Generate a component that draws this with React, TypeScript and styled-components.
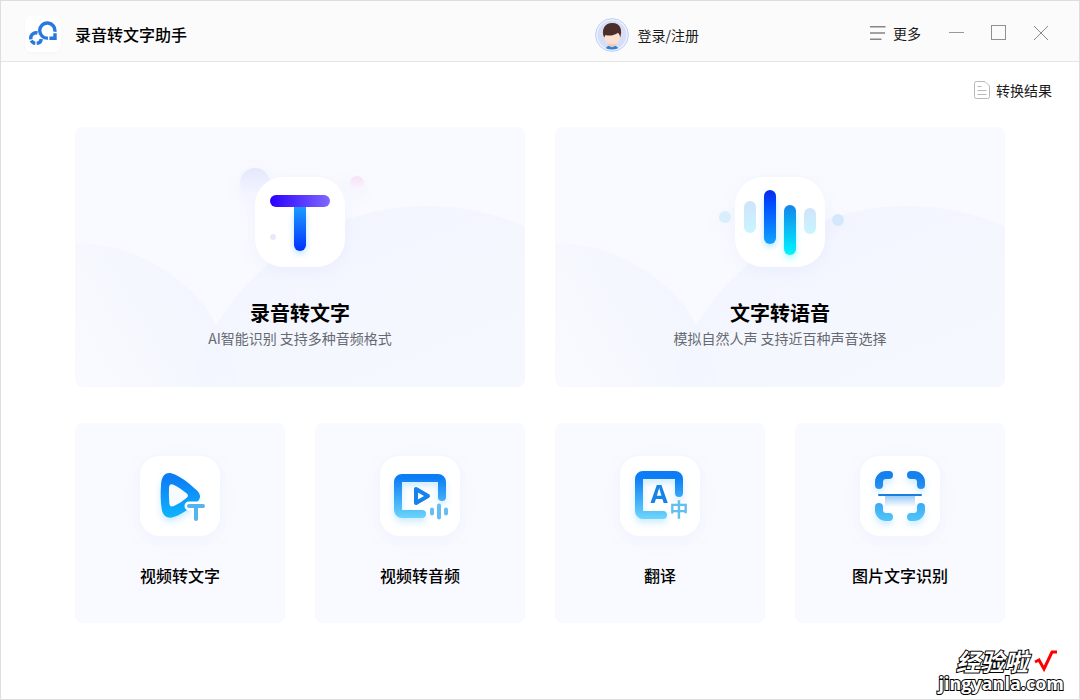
import React from "react";
import styled, { createGlobalStyle } from "styled-components";

const GlobalStyle = createGlobalStyle`
  *, *::before, *::after { box-sizing: border-box; }
  body {
    margin: 0;
    background: #ffffff;
    color: #000000;
    font-family: "Noto Sans CJK SC", "Noto Sans", sans-serif;
    font-size: 14px;
    line-height: 20px;
  }
  button { font: inherit; color: inherit; cursor: pointer; }
  svg { display: block; flex: none; }
`;

const AppWindow = styled.div`
  display: flex;
  flex-direction: column;
  min-height: 100vh;
  border: 1px solid #dedede;
`;

const TitleBar = styled.header`
  display: flex;
  align-items: center;
  height: 61px;
  padding: 6px 28px 0 24px;
  background: #fbfbfb;
  border-bottom: 1px solid #e6e6e6;
`;

const Brand = styled.h1`
  display: flex;
  align-items: center;
  gap: 14px;
  margin: 0;
  font-size: 16px;
  font-weight: 500;
  line-height: 24px;
  white-space: nowrap;
`;

const LogoTile = styled.span`
  display: grid;
  place-items: center;
  width: 36px;
  height: 36px;
  border-radius: 6px;
  background: #ffffff;
  box-shadow: 0 1px 3px rgba(0, 0, 0, 0.03);
`;

const PlainButton = styled.button`
  display: inline-flex;
  align-items: center;
  padding: 0;
  border: 0;
  background: none;
  white-space: nowrap;
`;

const AccountButton = styled(PlainButton)`
  gap: 9px;
  margin-left: auto;
  padding-top: 2px;
  color: #1a1a1a;
`;

const WindowTools = styled.div`
  display: flex;
  align-items: center;
  gap: 26px;
  margin-left: 171px;
  padding-bottom: 2px;
`;

const MoreButton = styled(PlainButton)`
  gap: 7px;
  color: #1a1a1a;
`;

const WindowButtons = styled.div`
  display: flex;
  gap: 22px;
`;

const WindowButton = styled(PlainButton)`
  justify-content: center;
  width: 20px;
  height: 20px;
`;

const Content = styled.main`
  display: flex;
  flex-direction: column;
  padding: 18px 27px 76px 74px;
`;

const ResultsLink = styled.a`
  display: flex;
  align-items: center;
  align-self: flex-end;
  gap: 6px;
  color: #1a1a1a;
  text-decoration: none;
`;

const CardGrid = styled.div`
  display: grid;
  grid-template-columns: repeat(4, 1fr);
  gap: 36px 30px;
  margin: 27px 47px 0 0;
`;

const Card = styled.button<{ $wide?: boolean }>`
  position: relative;
  display: flex;
  flex-direction: column;
  align-items: center;
  grid-column: span ${(p) => (p.$wide ? 2 : 1)};
  height: ${(p) => (p.$wide ? 260 : 200)}px;
  padding: ${(p) => (p.$wide ? 50 : 33)}px 0 0;
  border: 0;
  border-radius: 8px;
  background: #f9faff;
  overflow: hidden;
`;

const CardBackdrop = styled.svg`
  position: absolute;
  inset: 0;
  width: 100%;
  height: 100%;
`;

const IconTile = styled.span<{ $large?: boolean }>`
  position: relative;
  width: ${(p) => (p.$large ? 90 : 80)}px;
  height: ${(p) => (p.$large ? 90 : 80)}px;
  border-radius: ${(p) => (p.$large ? 28 : 20)}px;
  filter: drop-shadow(0 4px 8px rgba(90, 110, 240, 0.06));

  svg { overflow: visible; }
`;

const CardTitle = styled.span<{ $large?: boolean }>`
  position: relative;
  margin-top: ${(p) => (p.$large ? 32 : 27)}px;
  font-size: ${(p) => (p.$large ? 20 : 16)}px;
  font-weight: ${(p) => (p.$large ? 700 : 500)};
  line-height: ${(p) => (p.$large ? 28 : 24)}px;
`;

const CardNote = styled.span`
  position: relative;
  margin-top: 1px;
  color: #666a70;
`;

const Watermark = styled.div`
  position: absolute;
  right: 16px;
  bottom: 7px;
  display: flex;
  flex-direction: column;
  align-items: flex-end;
  color: #ffffff;
  font-weight: 700;
  -webkit-text-stroke: 2px #000000;
  paint-order: stroke fill;
`;

const WatermarkName = styled.div`
  display: flex;
  align-items: center;
  gap: 6px;
  padding-right: 6px;
  font-size: 24px;
  font-style: italic;
  line-height: 24px;
`;

const WatermarkSite = styled.div`
  font-family: "Open Sans", "Noto Sans", sans-serif;
  font-size: 18px;
  line-height: 20px;
`;

function LogoIcon() {
  return (
    <svg width="30" height="26" viewBox="0 0 30 26" fill="none" stroke="#2878e0" strokeWidth="3.400">
      <path d="M26.8 10.800A7.600 7.600 0 1 0 20 17.100" />
      <path d="M27 12.200v5h-5.600" />
      <path d="M9.500 12A5.300 5.300 0 0 0 2.900 18.300" />
      <path d="M3.300 19.500A5.300 5.300 0 0 0 7.300 22.400" />
      <path d="M8.700 22.400A5.300 5.300 0 0 0 13.300 17.900" />
    </svg>
  );
}

function Avatar() {
  return (
    <svg width="34" height="34" viewBox="0 0 34 34">
      <defs><clipPath id="avatarClip"><circle cx="17" cy="17" r="14.5" /></clipPath></defs>
      <circle cx="17" cy="17" r="16.4" fill="#eef3ff" stroke="#b9cff8" strokeWidth="1" />
      <circle cx="17" cy="17" r="14.5" fill="#d8def6" />
      <g clipPath="url(#avatarClip)">
        <path d="M10 33c0-4 3-5.500 7-5.500s7 1.500 7 5.500z" fill="#2f80d6" />
        <path d="M13.500 25h7v2.500q-3.500 3.500-7 0z" fill="#efc6b2" />
        <path d="M9.500 15h15.500v3.500c0 5-3.500 8-7.750 8s-7.750-3-7.750-8z" fill="#fde0d0" />
        <path d="M9.200 19.500C6 13 9 5 17.300 5 26 5 27.500 12.500 25.200 19.500c-.4-2-1-3.500-2.200-4.700-3.500 2.700-8.500 3.500-12.500 2.200z" fill="#4b2e2a" />
      </g>
    </svg>
  );
}

function MenuIcon() {
  return (
    <svg width="16" height="16" viewBox="0 0 16 16" stroke="#858585" strokeWidth="1.500">
      <path d="M0 1.750h15.500M0 8h15M0 14.250h11.500" />
    </svg>
  );
}

function ResultsIcon() {
  return (
    <svg width="16" height="18" viewBox="0 0 16 18" fill="none" stroke="#b8b8b8">
      <path d="M2.500.5h8.500l4.500 4.500v10.500a2 2 0 0 1-2 2h-11a2 2 0 0 1-2-2v-13a2 2 0 0 1 2-2z" />
      <path d="M3.500 5.500h4M3.500 9.500h9M3.500 13.500h9" />
    </svg>
  );
}

function Backdrop({ id }: { id: string }) {
  return (
    <CardBackdrop viewBox="0 0 450 260" preserveAspectRatio="xMidYMid slice" aria-hidden="true">
      <defs>
        <linearGradient id={`${id}Left`} gradientUnits="userSpaceOnUse" x1="10" y1="260" x2="130" y2="190">
          <stop stopColor="#f9faff" />
          <stop offset="1" stopColor="#f3f6fe" />
        </linearGradient>
        <linearGradient id={`${id}Right`} gradientUnits="userSpaceOnUse" x1="230" y1="90" x2="300" y2="260">
          <stop stopColor="#f1f4fe" />
          <stop offset="1" stopColor="#f5f7ff" />
        </linearGradient>
      </defs>
      <circle cx="0" cy="280" r="164" fill={`url(#${id}Left)`} />
      <circle cx="352" cy="325" r="246" fill={`url(#${id}Right)`} fillOpacity="0.800" />
    </CardBackdrop>
  );
}

function LetterIcon() {
  return (
    <svg width="90" height="90" viewBox="0 0 90 90">
      <defs>
        <linearGradient id="letterBar"><stop stopColor="#2a00ff" /><stop offset="1" stopColor="#8068ff" /></linearGradient>
        <linearGradient id="letterStem" x2="0" y2="1"><stop stopColor="#1ea0ff" /><stop offset="1" stopColor="#0032ff" /></linearGradient>
        <linearGradient id="letterBall" x2="0" y2="1"><stop stopColor="#e4e8fb" /><stop offset="1" stopColor="#f5f7ff" /></linearGradient>
        <linearGradient id="letterPink" x2="0" y2="1"><stop stopColor="#f8e0f6" /><stop offset="1" stopColor="#faf6ff" /></linearGradient>
        <filter id="letterGlow" x="-100%" y="-30%" width="300%" height="170%"><feGaussianBlur stdDeviation="3" /></filter>
      </defs>
      <circle cx="0" cy="6" r="15" fill="url(#letterBall)" />
      <circle cx="102" cy="6" r="7" fill="url(#letterPink)" />
      <rect width="90" height="90" rx="28" fill="#ffffff" />
      <rect x="39" y="34" width="12" height="43" rx="6" fill="#8fd0ff" opacity="0.600" filter="url(#letterGlow)" />
      <path d="M39 28h12v40a6 6 0 0 1-12 0z" fill="url(#letterStem)" />
      <rect x="15" y="18" width="60" height="12" rx="6" fill="url(#letterBar)" />
      <circle cx="18" cy="60" r="3" fill="#e8eafa" />
    </svg>
  );
}

function VoiceIcon() {
  return (
    <svg width="90" height="90" viewBox="0 0 90 90">
      <defs>
        <linearGradient id="voiceFaint" x2="0" y2="1"><stop stopColor="#cfe4f9" /><stop offset="1" stopColor="#c9f5ff" /></linearGradient>
        <linearGradient id="voiceTall" x2="0" y2="1"><stop stopColor="#0a2aee" /><stop offset="0.300" stopColor="#0050ff" /><stop offset="1" stopColor="#10a4ff" /></linearGradient>
        <linearGradient id="voiceLow" x2="0" y2="1"><stop stopColor="#1484ea" /><stop offset="1" stopColor="#00f6ff" /></linearGradient>
        <filter id="voiceGlow" x="-100%" y="-30%" width="300%" height="170%"><feGaussianBlur stdDeviation="3" /></filter>
      </defs>
      <rect width="90" height="90" rx="28" fill="#ffffff" />
      <circle cx="-10" cy="40" r="6" fill="#d8eefb" />
      <circle cx="103" cy="43" r="6" fill="#d3e9fb" />
      <rect x="29" y="20" width="12" height="50" rx="6" fill="#6dc8ff" opacity="0.500" filter="url(#voiceGlow)" />
      <rect x="49" y="36" width="12" height="46" rx="6" fill="#6df4ff" opacity="0.500" filter="url(#voiceGlow)" />
      <rect x="9" y="24" width="12" height="32" rx="6" fill="url(#voiceFaint)" />
      <rect x="29" y="13" width="12" height="54" rx="6" fill="url(#voiceTall)" />
      <rect x="49" y="28" width="12" height="50" rx="6" fill="url(#voiceLow)" />
      <rect x="69" y="31" width="12" height="26" rx="6" fill="url(#voiceFaint)" />
    </svg>
  );
}

interface SmallIconProps {
  id: string;
  start: string;
  end: string;
  children: React.ReactNode;
}

function SmallIcon({ id, start, end, children }: SmallIconProps) {
  return (
    <svg width="80" height="80" viewBox="0 0 80 80" fill="none" strokeLinecap="round" strokeLinejoin="round">
      <defs>
        <linearGradient id={id} gradientUnits="userSpaceOnUse" x1="30" y1="16" x2="30" y2="64">
          <stop offset="0.100" stopColor={start} />
          <stop offset="1" stopColor={end} />
        </linearGradient>
        <filter id={`${id}Glow`} filterUnits="userSpaceOnUse" x="0" y="0" width="80" height="80">
          <feDropShadow dx="0" dy="4" stdDeviation="3" floodColor="#3cb4ff" floodOpacity="0.250" />
        </filter>
      </defs>
      <rect width="80" height="80" rx="20" fill="#ffffff" />
      {children}
    </svg>
  );
}

function VideoTextIcon() {
  return (
    <SmallIcon id="videoText" start="#0a7cf5" end="#12b8ff">
      <g filter="url(#videoTextGlow)">
        <path
          d="M21 29C21.500 18 27 14.500 35 18.500 44 23 50 28 57 34.500 61 38.500 61 42.500 57 46 48 54 41 59 32 61.500 26 62.500 22.500 59 21.500 52 20.500 44 20.500 37 21 29z"
          fill="url(#videoText)"
        />
      </g>
      <path d="M29 32c.3-4 2-4.500 5-3 4.500 2.300 8.500 5 12.500 8.300 2 1.700 2 3.200 0 4.800-4 3.300-8 6-12.500 8-3 1-4.300.5-4.700-3-.5-5-.5-10-.3-15.100z" fill="#f6fbff" />
      <path d="M49 50h14M56 51v11" stroke="#ffffff" strokeWidth="9" />
      <path d="M49 50h14M56 51v12" stroke="#53b4ee" strokeWidth="4" />
    </SmallIcon>
  );
}

function VideoAudioIcon() {
  return (
    <SmallIcon id="videoAudio" start="#0a7cf5" end="#70d8fc">
      <g filter="url(#videoAudioGlow)">
        <path d="M42 58H22a4 4 0 0 1-4-4V26a4 4 0 0 1 4-4h36a4 4 0 0 1 4 4v15" stroke="url(#videoAudio)" strokeWidth="8" />
      </g>
      <path d="M36 33v14l12-7z" stroke="#1583ed" strokeWidth="4" />
      <path d="M52 53.500v4M59 49.500v12M66 53.500v4" stroke="#64bff1" strokeWidth="4" />
    </SmallIcon>
  );
}

const IconLetter = styled.text`
  font-family: "Open Sans", "Noto Sans CJK SC", sans-serif;
  font-weight: 700;
  text-anchor: middle;
`;

function TranslateIcon() {
  return (
    <SmallIcon id="translate" start="#0a7cf5" end="#70d8fc">
      <g filter="url(#translateGlow)">
        <path d="M43 59H23a4 4 0 0 1-4-4V23a4 4 0 0 1 4-4h32a4 4 0 0 1 4 4v14" stroke="url(#translate)" strokeWidth="8" />
      </g>
      <IconLetter x="39" y="47" fontSize="25" fill="#1583e8">A</IconLetter>
      <IconLetter x="59" y="61" fontSize="19" fill="#64bff1">中</IconLetter>
    </SmallIcon>
  );
}

function ScanIcon() {
  return (
    <SmallIcon id="scan" start="#1880ec" end="#50c4f8">
      <defs>
        <linearGradient id="scanBeam" x2="0" y2="1"><stop stopColor="#9cccf8" /><stop offset="1" stopColor="#ffffff" /></linearGradient>
      </defs>
      <rect x="25" y="40" width="30" height="11" fill="url(#scanBeam)" />
      <g filter="url(#scanGlow)">
        <path
          d="M19 29v-3a7 7 0 0 1 7-7h3M51 19h3a7 7 0 0 1 7 7v3M61 51v3a7 7 0 0 1-7 7h-3M29 61h-3a7 7 0 0 1-7-7v-3"
          stroke="url(#scan)"
          strokeWidth="8"
        />
      </g>
      <path d="M19 39h42" stroke="#1a7fdc" strokeWidth="2" />
    </SmallIcon>
  );
}

const mainTools = [
  { id: "speechToText", title: "录音转文字", note: "AI智能识别 支持多种音频格式", Icon: LetterIcon },
  { id: "textToSpeech", title: "文字转语音", note: "模拟自然人声 支持近百种声音选择", Icon: VoiceIcon },
];

const moreTools = [
  { title: "视频转文字", Icon: VideoTextIcon },
  { title: "视频转音频", Icon: VideoAudioIcon },
  { title: "翻译", Icon: TranslateIcon },
  { title: "图片文字识别", Icon: ScanIcon },
];

export default function App() {
  return (
    <AppWindow>
      <GlobalStyle />
      <TitleBar>
        <Brand>
          <LogoTile><LogoIcon /></LogoTile>
          录音转文字助手
        </Brand>
        <AccountButton type="button"><Avatar />登录/注册</AccountButton>
        <WindowTools>
          <MoreButton type="button"><MenuIcon />更多</MoreButton>
          <WindowButtons>
            <WindowButton type="button" aria-label="最小化">
              <svg width="16" height="16" viewBox="0 0 16 16" stroke="#999999"><path d="M0 7.500h15" /></svg>
            </WindowButton>
            <WindowButton type="button" aria-label="最大化">
              <svg width="16" height="16" viewBox="0 0 16 16" fill="none" stroke="#909090"><rect x="0.500" y="0.500" width="14" height="14" /></svg>
            </WindowButton>
            <WindowButton type="button" aria-label="关闭">
              <svg width="16" height="16" viewBox="0 0 16 16" stroke="#8a8a8a"><path d="M1 1l14 14M15 1L1 15" /></svg>
            </WindowButton>
          </WindowButtons>
        </WindowTools>
      </TitleBar>
      <Content>
        <ResultsLink href="#results"><ResultsIcon />转换结果</ResultsLink>
        <CardGrid>
          {mainTools.map(({ id, title, note, Icon }) => (
            <Card type="button" key={id} $wide>
              <Backdrop id={id} />
              <IconTile $large><Icon /></IconTile>
              <CardTitle $large>{title}</CardTitle>
              <CardNote>{note}</CardNote>
            </Card>
          ))}
          {moreTools.map(({ title, Icon }) => (
            <Card type="button" key={title}>
              <IconTile><Icon /></IconTile>
              <CardTitle>{title}</CardTitle>
            </Card>
          ))}
        </CardGrid>
      </Content>
      <Watermark>
        <WatermarkName>
          经验啦
          <svg width="24" height="24" viewBox="0 0 24 24" fill="none" stroke="#ff0000" strokeLinejoin="miter">
            <path d="M1 13l4-2 5 9L18 3h5" strokeWidth="3" />
          </svg>
        </WatermarkName>
        <WatermarkSite>jingyanla.com</WatermarkSite>
      </Watermark>
    </AppWindow>
  );
}
